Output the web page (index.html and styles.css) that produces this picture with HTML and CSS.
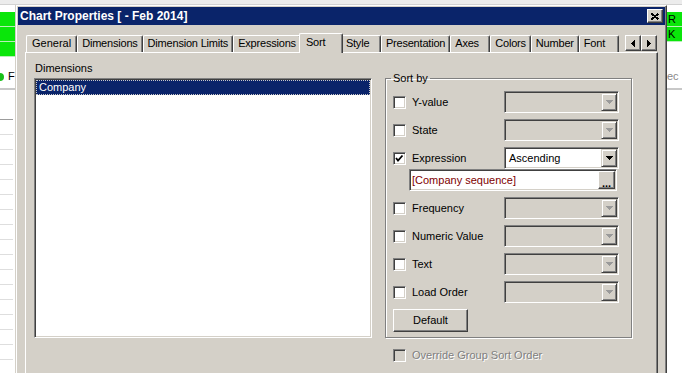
FILE: index.html
```html
<!DOCTYPE html>
<html lang="en">
<head>
    <meta charset="UTF-8">
    <meta name="viewport" content="width=device-width, initial-scale=1.0">
    <title>Chart Properties</title>
    <link rel="stylesheet" href="styles.css">
</head>
<body>
<div class="screen">
    <div class="topband"></div>
    <div class="desk">
        <div class="sheet sheet-left">
            <div class="cell"></div>
            <div class="cell"></div>
            <div class="cell"></div>
            <div class="caption"><span class="dot"></span>F</div>
            <div class="rule"></div>
            <div class="lines">
                <div class="line dark"></div>
                <div class="line"></div>
                <div class="line"></div>
                <div class="line"></div>
                <div class="line"></div>
                <div class="line"></div>
                <div class="line"></div>
                <div class="line"></div>
                <div class="line"></div>
                <div class="line"></div>
                <div class="line"></div>
                <div class="line"></div>
                <div class="line"></div>
                <div class="line"></div>
                <div class="line"></div>
                <div class="line"></div>
                <div class="line"></div>
            </div>
        </div>

        <div class="dialog">
            <div class="titlebar">
                <span class="title">Chart Properties [ - Feb 2014]</span>
                <span class="close-btn">
                    <svg width="8" height="7" viewBox="0 0 8 7"><path d="M0.5 0.5 L7.5 6.5 M7.5 0.5 L0.5 6.5" stroke="#000" stroke-width="1.8"/></svg>
                </span>
            </div>

            <div class="dialog-body">
                <div class="tabrow">
                    <div class="tabs">
                        <div class="tab first">General</div>
                        <div class="tab">Dimensions</div>
                        <div class="tab">Dimension Limits</div>
                        <div class="tab">Expressions</div>
                        <div class="tab active">Sort</div>
                        <div class="tab">Style</div>
                        <div class="tab">Presentation</div>
                        <div class="tab">Axes</div>
                        <div class="tab">Colors</div>
                        <div class="tab">Number</div>
                        <div class="tab">Font</div>
                    </div>
                    <div class="scroller">
                        <span class="btn-sm"><svg width="4" height="7" viewBox="0 0 4 7"><polygon points="4,0 0,3.5 4,7" fill="#000"/></svg></span>
                        <span class="btn-sm"><svg width="4" height="7" viewBox="0 0 4 7"><polygon points="0,0 4,3.5 0,7" fill="#000"/></svg></span>
                    </div>
                </div>

                <div class="panel">
                    <div class="dim-col">
                        <div class="label">Dimensions</div>
                        <div class="listbox">
                            <div class="item selected">Company</div>
                        </div>
                    </div>

                    <div class="sort-col">
                        <fieldset class="group">
                            <legend>Sort by</legend>

                            <div class="row">
                                <span class="check"></span>
                                <span class="opt-label">Y-value</span>
                                <span class="combo disabled"><span class="combo-text"></span><span class="drop"><svg width="7" height="4" viewBox="0 0 7 4"><polygon points="0,0 7,0 3.5,4"/></svg></span></span>
                            </div>
                            <div class="row">
                                <span class="check"></span>
                                <span class="opt-label">State</span>
                                <span class="combo disabled"><span class="combo-text"></span><span class="drop"><svg width="7" height="4" viewBox="0 0 7 4"><polygon points="0,0 7,0 3.5,4"/></svg></span></span>
                            </div>
                            <div class="row">
                                <span class="check"><svg width="11" height="11" viewBox="0 0 11 11"><polyline points="2,5 4,7.5 8.5,2.5" fill="none" stroke="#000" stroke-width="1.8"/></svg></span>
                                <span class="opt-label">Expression</span>
                                <span class="combo"><span class="combo-text">Ascending</span><span class="drop"><svg width="7" height="4" viewBox="0 0 7 4"><polygon points="0,0 7,0 3.5,4"/></svg></span></span>
                            </div>
                            <div class="row tight">
                                <span class="textbox"><span class="textbox-text">[Company sequence]</span><span class="ellipsis">...</span></span>
                            </div>
                            <div class="row">
                                <span class="check"></span>
                                <span class="opt-label">Frequency</span>
                                <span class="combo disabled"><span class="combo-text"></span><span class="drop"><svg width="7" height="4" viewBox="0 0 7 4"><polygon points="0,0 7,0 3.5,4"/></svg></span></span>
                            </div>
                            <div class="row">
                                <span class="check"></span>
                                <span class="opt-label">Numeric Value</span>
                                <span class="combo disabled"><span class="combo-text"></span><span class="drop"><svg width="7" height="4" viewBox="0 0 7 4"><polygon points="0,0 7,0 3.5,4"/></svg></span></span>
                            </div>
                            <div class="row">
                                <span class="check"></span>
                                <span class="opt-label">Text</span>
                                <span class="combo disabled"><span class="combo-text"></span><span class="drop"><svg width="7" height="4" viewBox="0 0 7 4"><polygon points="0,0 7,0 3.5,4"/></svg></span></span>
                            </div>
                            <div class="row">
                                <span class="check"></span>
                                <span class="opt-label">Load Order</span>
                                <span class="combo disabled"><span class="combo-text"></span><span class="drop"><svg width="7" height="4" viewBox="0 0 7 4"><polygon points="0,0 7,0 3.5,4"/></svg></span></span>
                            </div>
                            <div class="button">Default</div>
                        </fieldset>

                        <div class="row override">
                            <span class="check off"></span>
                            <span class="opt-label muted">Override Group Sort Order</span>
                        </div>
                    </div>
                </div>
            </div>
        </div>

        <div class="sheet sheet-right">
            <div class="cell">R</div>
            <div class="cell">K</div>
            <div class="caption muted-text">ec</div>
            <div class="rule"></div>
        </div>
    </div>
</div>
</body>
</html>
```

FILE: styles.css
```css
* {
    box-sizing: border-box;
}
body {
    margin: 0;
    font-family: "Liberation Sans", Arial, sans-serif;
    font-size: 11px;
    color: #000;
    background: #fff;
}
.screen {
    width: 682px;
    height: 373px;
    overflow: hidden;
    background: #fff;
}
.topband {
    height: 5px;
    background: #ececec;
    border-bottom: 1px solid #d2d2d2;
}
.desk {
    display: flex;
    height: 368px;
}

/* spreadsheet behind the dialog */
.sheet {
    padding-top: 7px;
    overflow: hidden;
}
.sheet-left {
    width: 16px;
    flex: none;
    border-right: 1px solid #d4d0c8;
}
.sheet-right {
    flex: 1;
}
.cell {
    height: 15px;
    background: #0ae60a;
    border-bottom: 1px solid #b8eeb8;
    line-height: 14px;
    white-space: nowrap;
    padding-left: 1px;
}
.caption {
    height: 13px;
    line-height: 13px;
    margin-top: 13px;
    display: flex;
    align-items: center;
    white-space: nowrap;
}
.sheet-right .cell + .cell + .caption {
    margin-top: 28px;
}
.muted-text {
    color: #8a8a8a;
}
.dot {
    width: 4px;
    height: 8px;
    background: #18c018;
    border-radius: 0 4px 4px 0;
    margin-right: 4px;
}
.rule {
    height: 2px;
    margin-top: 5px;
    background: #c8c8c8;
}
.lines {
    margin-top: 15px;
}
.line {
    height: 15px;
    width: 13px;
    border-bottom: 1px solid #dedede;
}
.line.dark {
    border-bottom-color: #9c9c9c;
}

/* dialog window */
.dialog {
    width: 651px;
    flex: none;
    background: #d4d0c8;
    border-top: 1px solid #fff;
    border-left: 1px solid #fff;
    border-right: 1px solid #404040;
    box-shadow: inset -1px 0 #808080;
    padding: 1px 1px 0 1px;
}
.titlebar {
    height: 18px;
    background: #0a246a;
    color: #fff;
    font-size: 12px;
    font-weight: bold;
    display: flex;
    align-items: center;
    justify-content: space-between;
    padding: 0 2px;
}
.close-btn {
    width: 16px;
    height: 14px;
    background: #d4d0c8;
    border: 1px solid;
    border-color: #fff #404040 #404040 #fff;
    box-shadow: inset -1px -1px #808080;
    display: flex;
    align-items: center;
    justify-content: center;
}
.close-btn svg, .btn-sm svg, .drop svg {
    display: block;
    shape-rendering: crispEdges;
}
.dialog-body {
    padding: 8px 7px 0 7px;
}

/* tabs */
.tabrow {
    display: flex;
    align-items: flex-end;
    height: 20px;
    position: relative;
    z-index: 1;
}
.tabs {
    flex: 1;
    min-width: 0;
    display: flex;
    align-items: flex-end;
    height: 20px;
    overflow: hidden;
    padding-left: 1px;
}
.tab {
    flex: none;
    height: 17px;
    min-width: 40px;
    margin-bottom: 1px;
    padding: 0 4px;
    letter-spacing: -0.2px;
    line-height: 15px;
    white-space: nowrap;
    background: #d4d0c8;
    border-top: 1px solid #fff;
    border-left: 1px solid #fff;
    border-right: 1px solid #404040;
    box-shadow: inset -1px 0 #808080;
    border-radius: 2px 2px 0 0;
}
.tab.first {
    padding: 0 5px;
    letter-spacing: 0;
}
.tab.active {
    height: 20px;
    min-width: 44px;
    margin: 0 -2px;
    padding: 0 6px;
    line-height: 16px;
    position: relative;
    z-index: 2;
}
.scroller {
    display: flex;
    flex: none;
    margin: 0 1px 2px 2px;
}
.btn-sm {
    width: 16px;
    height: 16px;
    background: #d4d0c8;
    border: 1px solid;
    border-color: #fff #404040 #404040 #fff;
    box-shadow: inset -1px -1px #808080;
    display: flex;
    align-items: center;
    justify-content: center;
}

/* page */
.panel {
    margin-top: -1px;
    height: 330px;
    display: flex;
    padding: 9px 0 0 8px;
    border-top: 1px solid #fff;
    border-left: 1px solid #fff;
    border-right: 1px solid #404040;
    box-shadow: inset -1px 0 #808080;
}
.dim-col {
    width: 338px;
    flex: none;
}
.label {
    line-height: 13px;
    padding-left: 1px;
    margin-bottom: 3px;
}
.listbox {
    height: 260px;
    background: #fff;
    padding: 1px;
    border: 1px solid;
    border-color: #808080 #fff #fff #808080;
    box-shadow: inset 1px 1px #404040, inset -1px -1px #d4d0c8;
}
.item {
    height: 15px;
    line-height: 13px;
    padding-left: 2px;
}
.item.selected {
    background: #0a246a;
    color: #fff;
    border: 1px dotted #c8c8c8;
}

.sort-col {
    width: 247px;
    margin-left: 13px;
    flex: none;
}
.group {
    margin: 10px 0 0 0;
    padding: 0 12px 5px 7px;
    border: 1px solid #808080;
    box-shadow: inset 1px 1px #fff, 1px 1px #fff;
    min-width: 0;
}
.group legend {
    padding: 0 2px;
    margin-left: -2px;
    line-height: 13px;
}
.row {
    display: flex;
    align-items: center;
    height: 22px;
    margin-top: 6px;
}
.row.tight {
    margin-top: 0;
}
.check {
    width: 13px;
    height: 13px;
    flex: none;
    margin-right: 6px;
    background: #fff;
    border: 1px solid;
    border-color: #808080 #fff #fff #808080;
    box-shadow: inset 1px 1px #404040, inset -1px -1px #d4d0c8;
}
.check svg {
    display: block;
}
.check.off {
    background: #d4d0c8;
}
.opt-label {
    flex: 1;
    white-space: nowrap;
}
.muted {
    color: #808080;
    text-shadow: 1px 1px #fff;
}
.combo {
    width: 115px;
    height: 22px;
    flex: none;
    display: flex;
    align-items: center;
    padding: 1px;
    background: #fff;
    border: 1px solid;
    border-color: #808080 #fff #fff #808080;
    box-shadow: inset 1px 1px #404040, inset -1px -1px #d4d0c8;
}
.combo.disabled {
    background: #d4d0c8;
}
.combo-text {
    flex: 1;
    padding-left: 3px;
}
.drop {
    width: 16px;
    height: 18px;
    background: #d4d0c8;
    border: 1px solid;
    border-color: #d4d0c8 #404040 #404040 #d4d0c8;
    box-shadow: inset 1px 1px #fff, inset -1px -1px #808080;
    display: flex;
    align-items: center;
    justify-content: center;
}
.drop polygon {
    fill: #000;
}
.combo.disabled .drop polygon {
    fill: #9a9a9a;
}
.textbox {
    width: 208px;
    height: 22px;
    margin-left: 16px;
    display: flex;
    align-items: center;
    padding: 1px;
    background: #fff;
    color: #800000;
    border: 1px solid;
    border-color: #808080 #fff #fff #808080;
    box-shadow: inset 1px 1px #404040, inset -1px -1px #d4d0c8;
}
.textbox-text {
    flex: 1;
    padding-left: 1px;
}
.ellipsis {
    width: 17px;
    height: 18px;
    color: #000;
    font-weight: bold;
    text-align: center;
    line-height: 22px;
    background: #d4d0c8;
    border: 1px solid;
    border-color: #fff #404040 #404040 #fff;
    box-shadow: inset -1px -1px #808080;
    overflow: hidden;
}
.button {
    width: 75px;
    height: 23px;
    margin-top: 6px;
    line-height: 21px;
    text-align: center;
    background: #d4d0c8;
    border: 1px solid;
    border-color: #fff #404040 #404040 #fff;
    box-shadow: inset -1px -1px #808080;
}
.override {
    padding-left: 8px;
}
```
